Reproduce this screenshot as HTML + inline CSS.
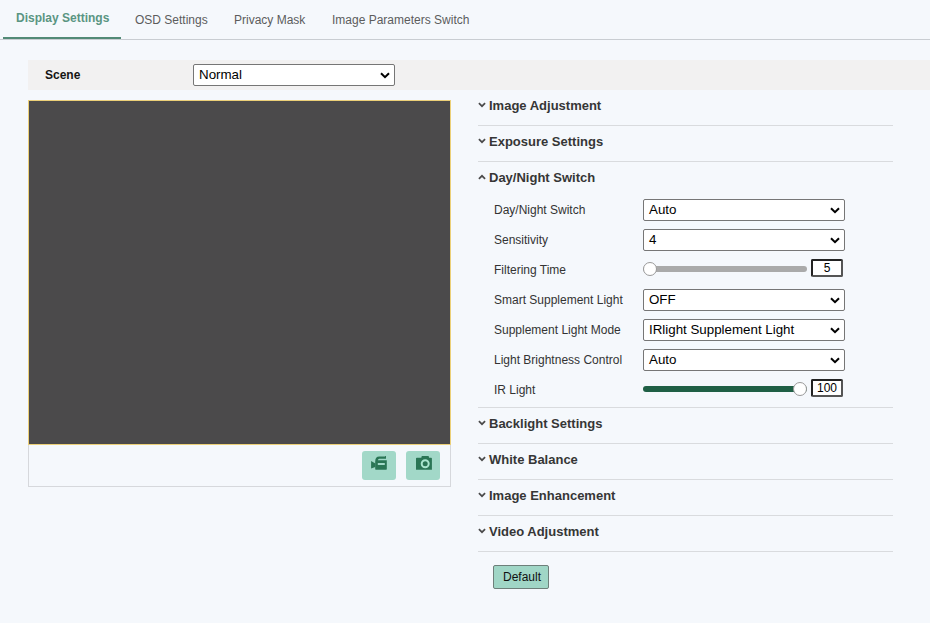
<!DOCTYPE html>
<html><head><meta charset="utf-8">
<style>
*{box-sizing:border-box;margin:0;padding:0}
html,body{width:930px;height:623px;overflow:hidden;background:#f5f8fc;font-family:"Liberation Sans",sans-serif;color:#333;position:relative}
.abs{position:absolute}
.tabline{left:0;top:39px;width:930px;height:1px;background:#c9cdd2}
.tabact{left:3px;top:37px;width:118px;height:2px;background:#528a76}
.tab{top:13px;font-size:12px;line-height:14px;color:#5c5c5c;white-space:nowrap}
.tab.on{color:#5a9582;font-weight:bold;top:11px}
.band{left:28px;top:60px;width:902px;height:30px;background:#f2f1f1}
.lbl{font-size:12px;line-height:14px;white-space:nowrap;color:#333}
.sel{background:#fff;border:1px solid #767676;border-radius:2px;width:202px;height:22px;font-size:13.33px;color:#000;white-space:nowrap}
.sel span{position:absolute;left:5px;top:2px;line-height:15px}
.sel svg{position:absolute;right:4px;top:7px}
.video{left:28px;top:100px;width:423px;height:387px;border:1px solid #d6d8dc}
.screen{left:28px;top:100px;width:423px;height:345px;border:1px solid #ecd078;background:#4b4a4b}
.btn{top:451px;width:34px;height:29px;background:#a2d8c8;border-radius:3px}
.sec{left:478px;width:415px;height:36px;border-bottom:1px solid #d9dbde}
.sec .t{position:absolute;left:11px;top:8px;font-size:13px;font-weight:bold;color:#363636;line-height:15px;white-space:nowrap}
.sec svg{position:absolute;left:0;top:12px}
.track{height:6px;border-radius:3px}
.thumb{width:14px;height:14px;border-radius:50%;background:#fff;border:1px solid #999}
.num{border-radius:2px;width:32px;height:18px;background:#fff;border:2px solid #222;border-right-color:#555;border-bottom-color:#555;font-size:12px;line-height:14px;text-align:center;color:#000}
.dbtn{left:493px;top:565px;width:56px;height:24px;background:#a0d6c6;border:1px solid #6e7f7a;border-radius:2px;padding-left:2px;font-size:12px;color:#111;text-align:center;line-height:22px}
</style></head><body>
<div class="abs tabline"></div>
<div class="abs tabact"></div>
<div class="abs tab on" style="left:16px">Display Settings</div>
<div class="abs tab" style="left:135px">OSD Settings</div>
<div class="abs tab" style="left:234px">Privacy Mask</div>
<div class="abs tab" style="left:332px">Image Parameters Switch</div>

<div class="abs band"></div>
<div class="abs lbl" style="left:45px;top:68px;font-weight:bold;color:#151515">Scene</div>
<div class="abs sel" style="left:193px;top:64px"><span>Normal</span><svg width="10" height="7" viewBox="0 0 10 7"><path d="M1 1.2 L5 5.2 L9 1.2" fill="none" stroke="#000" stroke-width="2"/></svg></div>

<div class="abs video"></div>
<div class="abs screen"></div>
<div class="abs btn" style="left:362px"><svg class="abs" style="left:0;top:0" width="34" height="29" viewBox="0 0 34 29"><path d="M9.1 9.9 L13.4 12.4 L13.4 15.9 L9.1 17.6 Z" fill="#2a7555"/><path d="M13.2 10.5 Q13.2 5.6 17.3 5.6 L23.1 5.6 L23.2 5 L24 5 L24 7.7 L17.4 7.7 Q15.9 7.7 15.9 9.3 L24.8 9.3 L24.8 18.1 Q24.8 18.7 24.2 18.7 L13.8 18.7 Q13.2 18.7 13.2 18.1 Z M15.8 12 L15.8 14 L22.8 14 L22.8 12 Z" fill="#2a7555" fill-rule="evenodd"/></svg></div>
<div class="abs btn" style="left:406px"><svg class="abs" style="left:0;top:0" width="34" height="29" viewBox="0 0 34 29"><path d="M10 7.6 Q10 6.8 10.8 6.8 L15.3 6.8 L15.8 5.1 L22.6 5.1 L23.1 6.8 L25.1 6.8 Q25.9 6.8 25.9 7.6 L25.9 18.7 L10 18.7 Z" fill="#2a7555"/><circle cx="19.2" cy="12.7" r="3.5" fill="none" stroke="#a9e6cf" stroke-width="2"/></svg></div>

<div class="abs sec" style="top:90px"><svg width="8" height="6" viewBox="0 0 8 6"><path d="M0.9 1.2 L4 4.2 L7.1 1.2" fill="none" stroke="#4a4a4a" stroke-width="1.7"/></svg><div class="t">Image Adjustment</div></div>
<div class="abs sec" style="top:126px"><svg width="8" height="6" viewBox="0 0 8 6"><path d="M0.9 1.2 L4 4.2 L7.1 1.2" fill="none" stroke="#4a4a4a" stroke-width="1.7"/></svg><div class="t">Exposure Settings</div></div>
<div class="abs sec" style="top:162px;height:246px"><svg width="8" height="6" viewBox="0 0 8 6"><path d="M0.9 4.8 L4 1.8 L7.1 4.8" fill="none" stroke="#4a4a4a" stroke-width="1.7"/></svg><div class="t">Day/Night Switch</div></div>

<div class="abs lbl" style="left:494px;top:203px">Day/Night Switch</div>
<div class="abs sel" style="left:643px;top:199px"><span>Auto</span><svg width="10" height="7" viewBox="0 0 10 7"><path d="M1 1.2 L5 5.2 L9 1.2" fill="none" stroke="#000" stroke-width="2"/></svg></div>
<div class="abs lbl" style="left:494px;top:233px">Sensitivity</div>
<div class="abs sel" style="left:643px;top:229px"><span>4</span><svg width="10" height="7" viewBox="0 0 10 7"><path d="M1 1.2 L5 5.2 L9 1.2" fill="none" stroke="#000" stroke-width="2"/></svg></div>
<div class="abs lbl" style="left:494px;top:263px">Filtering Time</div>
<div class="abs track" style="left:643px;top:266px;width:164px;background:#aaa"></div>
<div class="abs thumb" style="left:643px;top:262px"></div>
<div class="abs num" style="left:811px;top:259px">5</div>
<div class="abs lbl" style="left:494px;top:293px">Smart Supplement Light</div>
<div class="abs sel" style="left:643px;top:289px"><span>OFF</span><svg width="10" height="7" viewBox="0 0 10 7"><path d="M1 1.2 L5 5.2 L9 1.2" fill="none" stroke="#000" stroke-width="2"/></svg></div>
<div class="abs lbl" style="left:494px;top:323px">Supplement Light Mode</div>
<div class="abs sel" style="left:643px;top:319px"><span>IRlight Supplement Light</span><svg width="10" height="7" viewBox="0 0 10 7"><path d="M1 1.2 L5 5.2 L9 1.2" fill="none" stroke="#000" stroke-width="2"/></svg></div>
<div class="abs lbl" style="left:494px;top:353px">Light Brightness Control</div>
<div class="abs sel" style="left:643px;top:349px"><span>Auto</span><svg width="10" height="7" viewBox="0 0 10 7"><path d="M1 1.2 L5 5.2 L9 1.2" fill="none" stroke="#000" stroke-width="2"/></svg></div>
<div class="abs lbl" style="left:494px;top:383px">IR Light</div>
<div class="abs track" style="left:643px;top:386px;width:164px;background:#1f5f45"></div>
<div class="abs thumb" style="left:793px;top:382px"></div>
<div class="abs num" style="left:811px;top:379px">100</div>

<div class="abs sec" style="top:408px"><svg width="8" height="6" viewBox="0 0 8 6"><path d="M0.9 1.2 L4 4.2 L7.1 1.2" fill="none" stroke="#4a4a4a" stroke-width="1.7"/></svg><div class="t">Backlight Settings</div></div>
<div class="abs sec" style="top:444px"><svg width="8" height="6" viewBox="0 0 8 6"><path d="M0.9 1.2 L4 4.2 L7.1 1.2" fill="none" stroke="#4a4a4a" stroke-width="1.7"/></svg><div class="t">White Balance</div></div>
<div class="abs sec" style="top:480px"><svg width="8" height="6" viewBox="0 0 8 6"><path d="M0.9 1.2 L4 4.2 L7.1 1.2" fill="none" stroke="#4a4a4a" stroke-width="1.7"/></svg><div class="t">Image Enhancement</div></div>
<div class="abs sec" style="top:516px"><svg width="8" height="6" viewBox="0 0 8 6"><path d="M0.9 1.2 L4 4.2 L7.1 1.2" fill="none" stroke="#4a4a4a" stroke-width="1.7"/></svg><div class="t">Video Adjustment</div></div>

<div class="abs dbtn">Default</div>
</body></html>
